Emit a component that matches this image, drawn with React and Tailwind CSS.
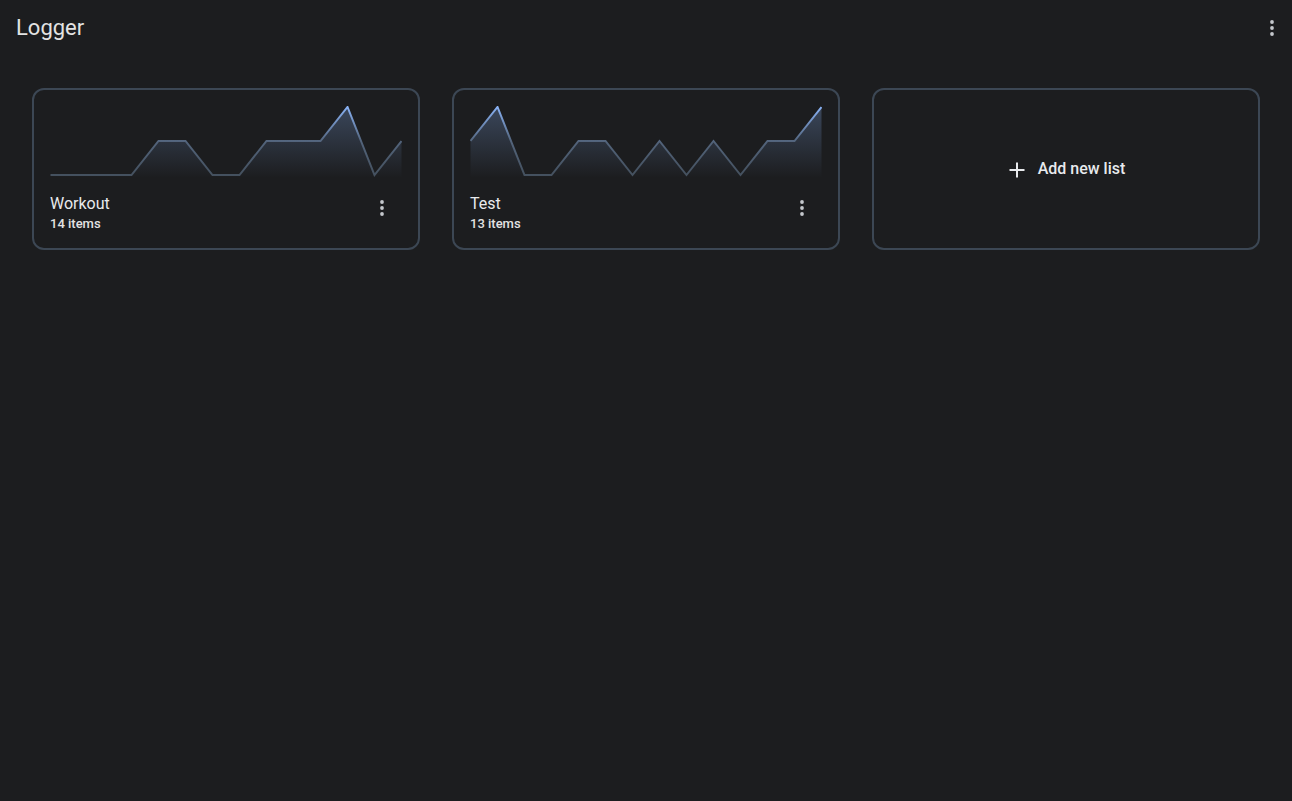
import React from "react";

const lists = [
	{ id: 1, name: "Workout", count: 14, values: [0, 0, 0, 0, 1, 1, 0, 0, 1, 1, 1, 2, 0, 1] },
	{ id: 2, name: "Test", count: 13, values: [1, 2, 0, 0, 1, 1, 0, 1, 0, 1, 0, 1, 1, 2] },
];

// Three vertical dots
const MoreVert = ({ className }) => (
	<svg width="20" height="20" viewBox="0 0 20 20" className={className}>
		<circle cx="10" cy="4" r="1.9" fill="currentColor" />
		<circle cx="10" cy="10" r="1.9" fill="currentColor" />
		<circle cx="10" cy="16" r="1.9" fill="currentColor" />
	</svg>
);

const levels = [69, 35, 1];

const Sparkline = ({ id, values }) => {
	const w = 352;
	const h = 72;
	const step = (w - 1) / (values.length - 1);
	const pts = values.map((v, i) => [0.5 + i * step, levels[v]]);
	const line = pts.map(([x, y], i) => `${i ? "L" : "M"}${x.toFixed(2)} ${y}`).join(" ");
	const area = `${line} L${pts[pts.length - 1][0].toFixed(2)} ${h} L0.5 ${h} Z`;

	return (
		<svg width={w} height={h} viewBox={`0 0 ${w} ${h}`} className="block shrink-0">
			<defs>
				<linearGradient id={`fill-${id}`} x1="0" y1="0" x2="0" y2={h} gradientUnits="userSpaceOnUse">
					<stop offset="0" stopColor="#8ab4f8" stopOpacity="0.28" />
					<stop offset="1" stopColor="#8ab4f8" stopOpacity="0" />
				</linearGradient>
				<linearGradient id={`stroke-${id}`} x1="0" y1="0" x2="0" y2={h} gradientUnits="userSpaceOnUse">
					<stop offset="0" stopColor="#8ab4f8" />
					<stop offset="0.5" stopColor="#52637a" />
					<stop offset="1" stopColor="#434f5c" />
				</linearGradient>
			</defs>
			<path d={area} fill={`url(#fill-${id})`} />
			<path d={line} fill="none" stroke={`url(#stroke-${id})`} strokeWidth="2" strokeLinejoin="miter" />
		</svg>
	);
};

const ListCard = ({ list }) => (
	<div className="h-[162px] rounded-xl border-2 border-[#3c4754] px-4 pt-4 flex flex-col">
		<Sparkline id={list.id} values={list.values} />
		<div className="mt-4 flex items-center justify-between">
			<div className="flex flex-col">
				<span className="text-base leading-[20px] text-[#e8eaed]">{list.name}</span>
				<span className="text-[13px] leading-[20px] font-medium text-[#e3e3e3]">{list.count} items</span>
			</div>
			<button className="mr-[10px] -mt-[12px] text-[#c4c7cc]">
				<MoreVert />
			</button>
		</div>
	</div>
);

const AddCard = () => (
	<button className="h-[162px] rounded-xl border-2 border-[#3c4754] flex items-center justify-center gap-[13px] text-[#e8eaed]">
		<svg width="16" height="16" viewBox="0 0 16 16" className="mt-px ml-[2px]">
			<path d="M8 0.5v15M0.5 8h15" stroke="currentColor" strokeWidth="2" />
		</svg>
		<span className="text-base font-medium">Add new list</span>
	</button>
);

const App = () => {
	return (
		<div className="min-h-screen bg-[#1c1d1f] font-['Roboto',sans-serif]">
			<header className="h-14 flex items-center justify-between pl-4 pr-[10px]">
				<h1 className="text-[22px] text-[#e3e3e3] -mt-[2px]">Logger</h1>
				<button className="text-[#c4c7cc]">
					<MoreVert />
				</button>
			</header>
			<main className="px-8 pt-8 grid grid-cols-3 gap-8">
				{lists.map((list) => (
					<ListCard key={list.id} list={list} />
				))}
				<AddCard />
			</main>
		</div>
	);
};

export default App;
